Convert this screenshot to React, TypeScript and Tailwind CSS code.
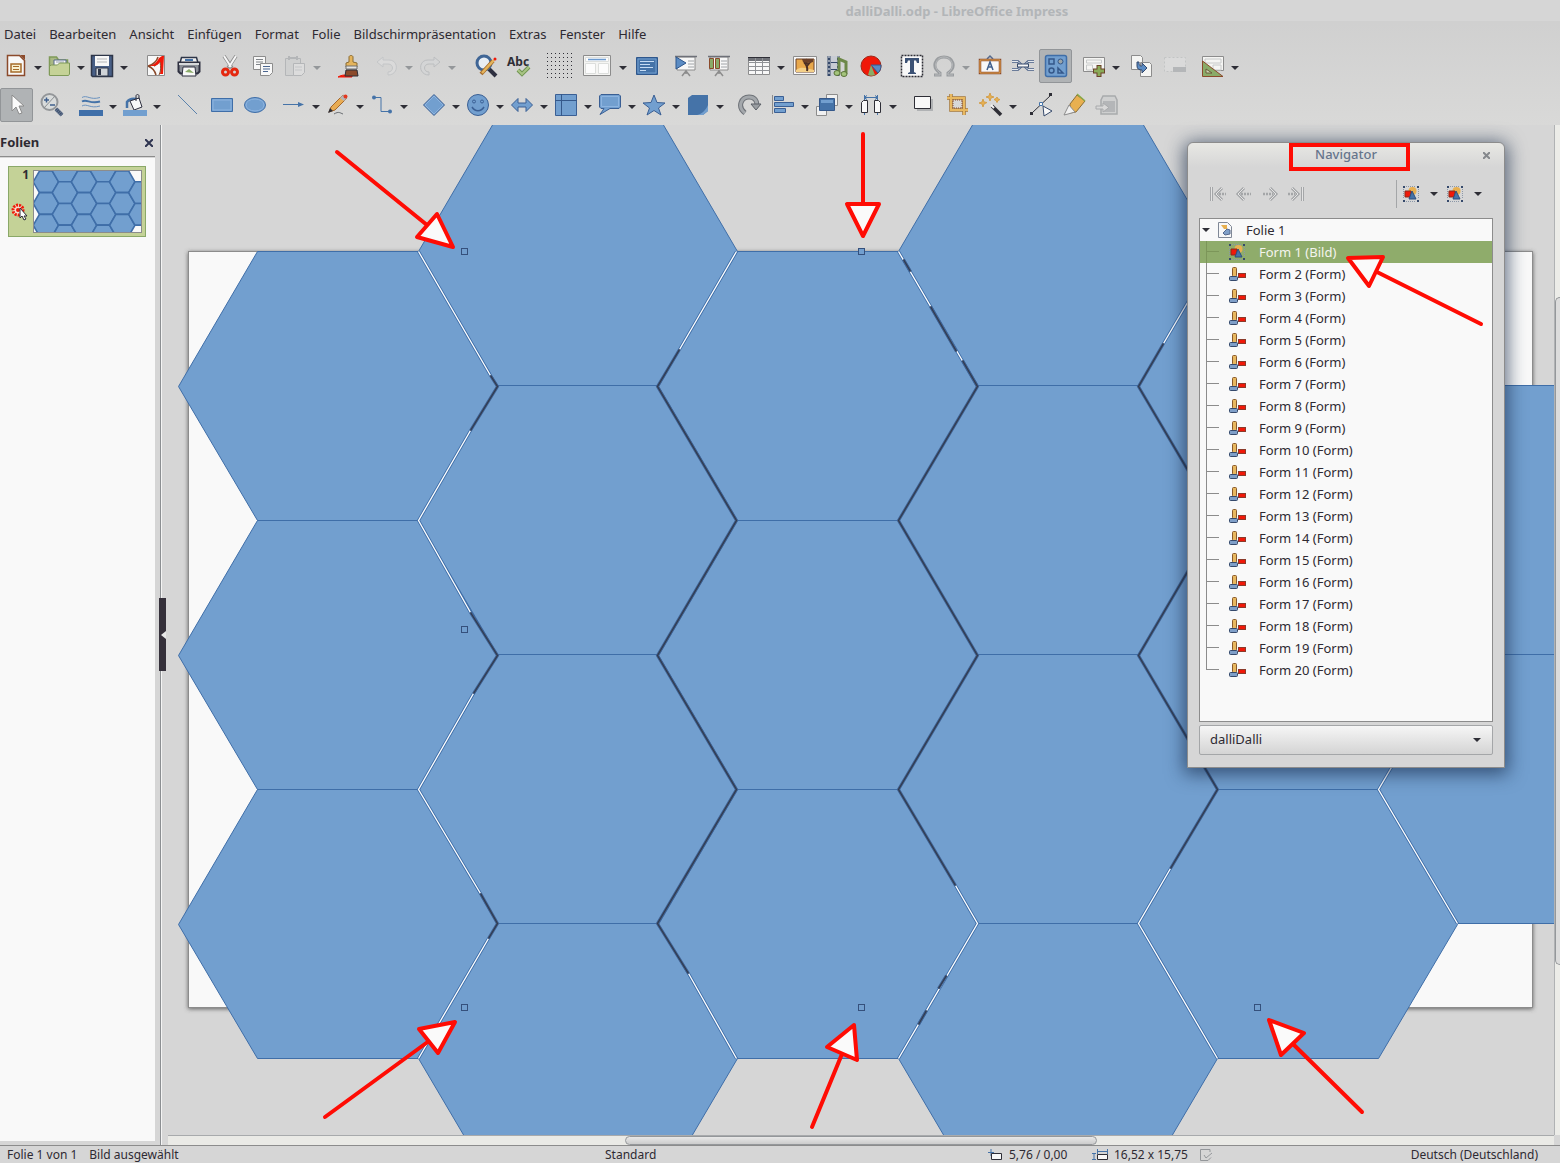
import type { ReactNode } from 'react'
import clsx from 'clsx'

type Tool = {
    name: string
    icon: ReactNode
    gap?: string
    split?: boolean
    active?: boolean
    disabled?: boolean
    wide?: boolean
}

const menuItems = ['Datei', 'Bearbeiten', 'Ansicht', 'Einfügen', 'Format', 'Folie', 'Bildschirmpräsentation', 'Extras', 'Fenster', 'Hilfe']

const Svg = ({ children }: { children: ReactNode }) => (
    <svg viewBox="0 0 24 24" className="w-6 h-6 shrink-0" fill="none" aria-hidden="true">{children}</svg>
)

const Board = ({ children }: { children: ReactNode }) => (
    <Svg>
        <path d="M8 22l4-5 4 5M12 16v4" stroke="#8c8c8c" strokeWidth="1.5" />
        <path d="M3 3h18v13H3z" fill="#f7f7f7" stroke="#8c8c8c" />
        <path d="M1 2.5h22" stroke="#6e7078" strokeWidth="1.5" />
        <path d="M14 7h6M14 10h6M14 13h6" stroke="#a0a4a8" />
        {children}
    </Svg>
)

const standardTools: Tool[] = [
    { name: 'Neu', split: true, icon: <Svg><path d="M3.5 1.5h12l5 5v15h-17z" fill="#f8f8f8" stroke="#8b4a2b" strokeWidth="1.5" /><path d="M16 1h5v5z" fill="#8b4a2b" /><path d="M7 10h10v8H7z" fill="#f8f0d0" stroke="#a56b2a" strokeWidth="1.5" /><path d="M9 12.500h6M9 15.500h6" stroke="#a56b2a" /></Svg> },
    { name: 'Öffnen', split: true, icon: <Svg><path d="M2.500 21V3h7l2 3h9v5" fill="#a9b884" stroke="#7f9a58" strokeWidth="1.5" /><path d="M7 6h12v8H7z" fill="#f8f8f8" stroke="#55698c" /><path d="M9 8h8" stroke="#9aa4b4" /><path d="M2.500 21.500V12l2-1h6l2-2h10v11l-1 1.500z" fill="#c5d297" stroke="#7f9a58" /></Svg> },
    { name: 'Speichern', split: true, icon: <Svg><path d="M1.500 1.500h21v21h-20l-1-1z" fill="#485f86" stroke="#2e3648" strokeWidth="1.5" /><path d="M5 2h14v10H5z" fill="#f8f8f8" /><path d="M7 5h10M7 8h10" stroke="#b4b6b8" /><path d="M6 14h12v8H6z" fill="#d0d4d8" stroke="#2e3648" /><path d="M8 15h3v6H8z" fill="#2e3648" /></Svg> },
    { name: 'PDF', gap: 'ml-2.5', icon: <Svg><path d="M3.500 1.500h17v20h-17z" fill="#f8f8f8" stroke="#8c8c8c" /><path d="M4 12C9 11 13 7 14 3M4 12c5 2 7 5 8 9M10 12c3-1 5-4 7-8" stroke="#8b4a2b" strokeWidth="1.500" /><path d="M5 12c5-1 8-4 10-8l3-2h2l-1 18h-3c1-5 1-8 0-12-1 2-3 3-6 4z" fill="#f01808" /><path d="M16 8c1 5 1 9-1 13" stroke="#8b4a2b" /></Svg> },
    { name: 'Drucken', icon: <Svg><path d="M4.500 3.500h15L21 9H3z" fill="#f0f0f0" stroke="#2e3648" strokeWidth="1.500" /><path d="M8 6h8" stroke="#4573a8" strokeWidth="2" /><path d="M1.500 8.500h21v9l-2 2h-17l-2-2z" fill="#8c9098" stroke="#2e3040" strokeWidth="2" /><path d="M2 10h20" stroke="#d8dadc" strokeWidth="2" /><path d="M6 13h12l1 9H5z" fill="#f8f8f8" stroke="#2e3040" /><path d="M8 18l4-3 5 4z" fill="#8aab68" /></Svg> },
    { name: 'Ausschneiden', gap: 'ml-2', icon: <Svg><path d="M6 2l8 12M18 2l-8 12" stroke="#8c8c8c" strokeWidth="3.500" /><path d="M6 2l7 11M18 2l-7 11" stroke="#f7f7f7" strokeWidth="2" /><circle cx="7.500" cy="18" r="3" stroke="#e42810" strokeWidth="3" /><circle cx="16.500" cy="18" r="3" stroke="#e42810" strokeWidth="3" /></Svg> },
    { name: 'Kopieren', icon: <Svg><path d="M2.500 2.500h12v13h-12z" fill="#f8f8f8" stroke="#8c8c8c" /><path d="M5 5.500h7M5 8h7M5 10.500h5" stroke="#808488" /><path d="M9.500 9.500h12v9l-3 3h-9z" fill="#f8f8f8" stroke="#8c8c8c" /><path d="M12 12.500h7M12 15h7M12 17.500h5" stroke="#4b6690" /></Svg> },
    { name: 'Einfügen', split: true, disabled: true, icon: <Svg><path d="M2.500 4.500h15v17h-15z" fill="#cfd0d0" stroke="#b4b6b8" /><path d="M6 2v4M14 2v4M6 4h8" stroke="#b4b6b8" strokeWidth="2" /><path d="M10.500 9.500h11v9l-3 3h-8z" fill="#dcdcdc" stroke="#b4b6b8" /><path d="M12 13h7M12 16h7" stroke="#c4c6c8" /></Svg> },
    { name: 'Format übertragen', gap: 'ml-2.5', icon: <Svg><path d="M1 23c3-2 6-2 8-2l6 1v1z" fill="#f01808" stroke="#f01808" /><path d="M12 8V3c0-2 4-2 4 0v5l4 1v4H9V9z" fill="#e4b45c" stroke="#8a6d35" /><path d="M9 12h11v3H9z" fill="#e4e4e4" stroke="#707070" /><path d="M9 16h11l1 6H8z" fill="#8b4a2b" stroke="#2e2e36" /></Svg> },
    { name: 'Rückgängig', gap: 'ml-1.5', split: true, disabled: true, icon: <Svg><path d="M2 8l6-5v3h6c10 0 10 15-1 15v-3c6 0 6-8 0-8H8v3z" fill="#dadada" stroke="#c4c6c8" /></Svg> },
    { name: 'Wiederherstellen', split: true, disabled: true, icon: <Svg><path d="M22 8l-6-5v3h-6c-10 0-10 15 1 15v-3c-6 0-6-8 0-8h5v3z" fill="#d4d5d6" stroke="#bcbec0" /></Svg> },
    { name: 'Suchen', gap: 'ml-3', icon: <Svg><path d="M15 15l7 7" stroke="#2e3040" strokeWidth="4" /><circle cx="10" cy="9" r="7" fill="#e8eef4" stroke="#3f6595" strokeWidth="3" /><path d="M7 20L19 7" stroke="#a56b2a" strokeWidth="4" /><path d="M8 19L20 6" stroke="#e4b45c" strokeWidth="2.500" /><circle cx="21" cy="5" r="1.500" fill="#f01808" /></Svg> },
    { name: 'Rechtschreibung', icon: <svg viewBox="0 0 28 26" className="w-7 h-6.5 shrink-0" fill="none" aria-hidden="true"><text x="2" y="13" fontSize="12" fontWeight="700" fontFamily="Noto Sans, sans-serif" fill="#2e2e36">Abc</text><path d="M13 17l4 4 7-7" stroke="#6f9450" strokeWidth="4" /><path d="M13 17l4 4 7-7" stroke="#a8c484" strokeWidth="2" /></svg> },
    { name: 'Raster', gap: 'ml-2', icon: <svg viewBox="0 0 26 26" className="w-6.5 h-6.5 shrink-0"><path d="M0 .5h26M0 4.500h26M0 8.500h26M0 12.500h26M0 16.500h26M0 20.500h26M0 24.500h26" stroke="#2e2e36" strokeDasharray="1 3" /></svg> },
    { name: 'Ansicht', split: true, wide: true, icon: <svg viewBox="0 0 30 24" className="w-7.5 h-6 shrink-0" fill="none"><path d="M1.500 1.500h27v20h-27z" fill="#f5f5f3" stroke="#8c8c8c" /><path d="M3.500 3.500h23v4h-23zM3.500 9.500h10v10h-10zM16.500 9.500h10v10h-10z" fill="#fcfcfc" stroke="#dcdedc" /><path d="M6 5.500h18" stroke="#6b9ad0" strokeWidth="1.500" /></svg> },
    { name: 'Masterfolie', gap: 'ml-0.5', icon: <Svg><path d="M1.500 3.500h21v17h-21z" fill="#4573a8" stroke="#2f578c" /><path d="M3 5h18v14H3z" stroke="#729fcf" /><path d="M5 7.500h14M5 10.500h10M5 13.500h13M5 16.500h6" stroke="#c6dcf4" /></Svg> },
    { name: 'Präsentation', gap: 'ml-1.5', icon: <Board><path d="M2 3l10 6-10 6z" fill="#5b8cc4" stroke="#2f578c" /></Board> },
    { name: 'Ab aktueller Folie', icon: <Board><path d="M2.500 4.500h4v10h-4zM8.500 4.500h4v10h-4z" fill="#8aab68" stroke="#8b4a2b" /></Board> },
    { name: 'Tabelle', gap: 'ml-2', split: true, icon: <Svg><path d="M1.500 3.500h21v17h-21z" fill="#f8f8f8" stroke="#8c8c8c" /><path d="M1 3h22v4H1z" fill="#707278" /><path d="M1 3.500h22" stroke="#2e2e36" /><path d="M1 8.500h22M1 12.500h22M1 16.500h22M8.500 4v17M15.500 4v17" stroke="#909296" /></Svg> },
    { name: 'Bild', gap: 'ml-0.5', icon: <Svg><path d="M.5 2.500h23v18H.5z" fill="#f8f8f8" stroke="#8c8c8c" /><path d="M3 5h18v13H3z" fill="#e8a84c" stroke="#6b4028" /><path d="M3 16c5-4 10-2 18 0v2H3z" fill="#f4d088" /><path d="M14 17c1-4 0-6-3-9M14 12l4-5M14 10l-1-5" stroke="#4b2e24" strokeWidth="2" /><path d="M9 5h11v3l-3 1-7-1z" fill="#6b4028" /></Svg> },
    { name: 'Audio oder Video', icon: <Svg><path d="M3 2v20M12 2v20" stroke="#35496b" strokeWidth="3" /><path d="M3 2v20M12 2v20" stroke="#f0f0f0" strokeDasharray="2 2" /><path d="M5 2h6v20H5z" fill="#c8ccd4" /><path d="M5 8.500h6M5 15.500h6" stroke="#35496b" /><path d="M13 19V5l7 3v12" stroke="#6d8848" strokeWidth="3" /><ellipse cx="11" cy="19" rx="3" ry="2.500" fill="#a4c47c" stroke="#5b7338" /><ellipse cx="18" cy="20" rx="3" ry="2.500" fill="#a4c47c" stroke="#5b7338" /></Svg> },
    { name: 'Diagramm', icon: <Svg><circle cx="12" cy="12" r="10" fill="#f01808" stroke="#a02818" /><path d="M12 11h10c0 4-1 6-3 8z" fill="#5b8cc4" stroke="#35598c" /><path d="M12 11l4 10c-2 1-5 1-7 0z" fill="#8aab68" /></Svg> },
    { name: 'Textfeld', gap: 'ml-2', icon: <Svg><path d="M1.500 1.500h21v21h-21z" fill="#f8f8f8" stroke="#2e2e36" strokeWidth="1.500" strokeDasharray="2 1" /><path d="M5 4h14v5h-2l-1-2.500h-2V18l2 1v1H8v-1l2-1V6.500H8L7 9H5z" fill="#3b5174" /></Svg> },
    { name: 'Sonderzeichen', split: true, disabled: true, icon: <Svg><path d="M2 21h6v-2C-1 13 3 3 12 3s13 10 4 16v2h6" stroke="#9a9da0" strokeWidth="3" /><path d="M3 21h5v-2C0 13 4 3 12 3s12 10 4 16v2h5" stroke="#b8babc" /></Svg> },
    { name: 'Fontwork', gap: 'ml-0.5', icon: <Svg><path d="M9 5l3-3 3 3" stroke="#55698c" strokeWidth="1.500" /><path d="M2 6h20v13H2z" fill="#f8f8f8" stroke="#8b4a2b" strokeWidth="2.500" /><path d="M2 6h20v13H2z" stroke="#e8a850" /><path d="M9 16l3-8 3 8M10 13h4" stroke="#3f5f8c" strokeWidth="1.500" /></Svg> },
    { name: 'Hyperlink', icon: <Svg><path d="M1 7.500h6l3 3M1 15.500h6l3-3M23 7.500h-6l-3 3M23 15.500h-6l-3-3" stroke="#485f86" strokeWidth="2.500" /><path d="M1 7.500h6l3 3M1 15.500h6l3-3M23 7.500h-6l-3 3M23 15.500h-6l-3-3" stroke="#e4e8ec" /><path d="M6 11.500h12" stroke="#35496b" strokeWidth="4" /><path d="M7 11.500h10" stroke="#f8f8f8" strokeWidth="2" /></Svg> },
    { name: 'Zeichenfunktionen', active: true, icon: <Svg><rect x="1.500" y="1.500" width="21" height="21" rx="2" fill="#729fcf" stroke="#3f6ea8" strokeWidth="1.500" /><path d="M5 5h5v5H5zM14 14v5h5z" stroke="#35588a" strokeWidth="1.500" /><circle cx="16.500" cy="7.500" r="2.500" fill="#9aa4a8" stroke="#35588a" /><circle cx="7.500" cy="16.500" r="2.500" stroke="#35588a" strokeWidth="1.500" /></Svg> },
    { name: 'Neue Folie', gap: 'ml-1.5', split: true, icon: <Svg><path d="M1.500 3.500h21v14h-21z" fill="#f5f5f3" stroke="#8c8c8c" /><path d="M4.500 6h15v3h-15zM4.500 11h6v5h-6z" stroke="#c8caca" /><path d="M17 11v12M11 17h12" stroke="#6b4028" strokeWidth="5" /><path d="M17 12v10M12 17h10" stroke="#8aab58" strokeWidth="3" /></Svg> },
    { name: 'Folie duplizieren', gap: 'ml-1', icon: <Svg><path d="M1.500 1.500h9l2 2v12h-11zM10.500 8.500h9l2 2v12h-11z" fill="#f5f5f3" stroke="#8c8c8c" /><path d="M7 8v4c0 3 2 4 5 4v3l5-5-5-5v3c-2 0-3 0-3-4z" fill="#5b8cc4" stroke="#35496b" /></Svg> },
    { name: 'Folie ausblenden', disabled: true, icon: <Svg><path d="M1.500 3.500h21v14h-21z" fill="#dadada" stroke="#c2c4c4" strokeDasharray="2 2" /><path d="M10 13h13v5H10z" fill="#b4b6b8" /></Svg> },
    { name: 'Folienlayout', gap: 'ml-1.5', split: true, icon: <Svg><path d="M1.500 2.500h21v14h-21z" fill="#f5f5f3" stroke="#8c8c8c" /><path d="M4 5h16v4H4zM12 11h8v5h-8z" stroke="#c8caca" /><path d="M1.500 7v15.500H22z" fill="#8aab68" stroke="#8b4a2b" /><path d="M5 15v4h6z" fill="#d0dcb8" stroke="#6b5a38" /></Svg> },
]

const drawingTools: Tool[] = [
    { name: 'Auswahl', active: true, icon: <Svg><path d="M7 2v16l4-4 3 7 3-1-3-7h5z" fill="#fafafa" stroke="#8c8c8c" /></Svg> },
    { name: 'Zoom', gap: 'ml-0.5', icon: <Svg><path d="M16 16l6 6" stroke="#6b7a90" strokeWidth="4" /><path d="M16 16l6 6" stroke="#35496b" strokeWidth="3" strokeDasharray="1 1" /><circle cx="9.500" cy="9" r="8" fill="#d9dcdc" stroke="#94979a" strokeWidth="2" /><path d="M4 15L15 3" stroke="#8c8f92" /><path d="M4 7h5M6.500 4.500v5M10 12h5" stroke="#3f5f8c" strokeWidth="1.500" /></Svg> },
    { name: 'Linienfarbe', gap: 'ml-1.5', split: true, icon: <Svg><path d="M3 4.500c5-3 8 3 18 0M3 13c5-3 8 3 18 0" stroke="#6b93c0" /><path d="M3 8.500c5-3 8 3 18 0" stroke="#4573a8" strokeWidth="2" /><path d="M0 17h24v6H0z" fill="#3f6fa9" /></Svg> },
    { name: 'Flächenfarbe', split: true, icon: <Svg><path d="M4 15V9c3-4 7-4 12-2" stroke="#4573a8" strokeWidth="2.500" /><path d="M7 8l9-3 3 9-8 3z" fill="#f8f8f8" stroke="#2e3040" /><path d="M13 8V3c0-2 3-2 3 0v3" stroke="#2e3040" /><path d="M0 17h24v6H0z" fill="#729fcf" /></Svg> },
    { name: 'Linie', gap: 'ml-2', icon: <Svg><path d="M3 2l19 19" stroke="#5b82ac" /></Svg> },
    { name: 'Rechteck', gap: 'ml-0.5', icon: <Svg><path d="M1.500 5.500h21v13h-21z" fill="#729fcf" stroke="#3f6ea8" /><path d="M3 7h18v10H3z" stroke="#8db4e0" /></Svg> },
    { name: 'Ellipse', icon: <Svg><ellipse cx="12" cy="12" rx="10.500" ry="7.500" fill="#729fcf" stroke="#3f6ea8" /><ellipse cx="12" cy="12" rx="9" ry="6" stroke="#8db4e0" /></Svg> },
    { name: 'Pfeil', gap: 'ml-1.5', split: true, icon: <Svg><path d="M1 11.500h17" stroke="#4573a8" /><path d="M16 9l6 2.500-6 2.500z" fill="#4573a8" /></Svg> },
    { name: 'Stift', split: true, icon: <Svg><path d="M8 21c5-3 6-1 9 0" stroke="#686c70" /><path d="M3 19l2-5L17 2l4 3L9 17z" fill="#e8ac54" stroke="#a5682c" /><path d="M14 5l4 3 3-3-4-3z" fill="#b4b6b8" /><circle cx="19.500" cy="3.500" r="2" fill="#e43820" /><path d="M2 20l2-5 3 3z" fill="#2e2e36" /></Svg> },
    { name: 'Verbinder', split: true, icon: <Svg><path d="M4 4.500h7v14h9" stroke="#4573a8" /><circle cx="4" cy="4.500" r="2" fill="#4573a8" /><circle cx="20" cy="18.500" r="2" fill="#4573a8" /></Svg> },
    { name: 'Standardformen', gap: 'ml-2', split: true, icon: <Svg><path d="M12 1.500L22.500 12 12 22.500 1.500 12z" fill="#729fcf" stroke="#3a5f94" /><path d="M12 3l9 9-9 9-9-9z" stroke="#8db4e0" /></Svg> },
    { name: 'Symbolformen', split: true, icon: <Svg><circle cx="12" cy="12" r="10.500" fill="#729fcf" stroke="#3a5f94" /><circle cx="8" cy="8.500" r="1.500" stroke="#3a5f94" /><circle cx="16" cy="8.500" r="1.500" stroke="#3a5f94" /><path d="M6 14c3 5 9 5 12 0" stroke="#3a5f94" strokeWidth="1.500" /></Svg> },
    { name: 'Blockpfeile', split: true, icon: <Svg><path d="M1.500 12L8 5.500V10h8V5.500l6.500 6.500-6.500 6.500V14H8v4.500z" fill="#729fcf" stroke="#3a5f94" /></Svg> },
    { name: 'Flussdiagramm', split: true, icon: <Svg><path d="M1.500 1.500h21v21h-21z" fill="#729fcf" stroke="#3a5f94" /><path d="M1 7.500h22M7.500 1v22" stroke="#35588a" /></Svg> },
    { name: 'Legenden', split: true, icon: <Svg><path d="M3 1.500h18L22.500 3v11L21 15.500h-9L2 21.500l4-6H3L1.500 14V3z" fill="#729fcf" stroke="#3a5f94" /><path d="M3.500 3.500h17v10h-17z" stroke="#8db4e0" /></Svg> },
    { name: 'Sterne', split: true, icon: <Svg><path d="M12 2l3 7.500 8 .5-6.500 5L19 22l-7-4.500L5 22l2.500-7L1 10l8-.5z" fill="#729fcf" stroke="#3a5f94" /></Svg> },
    { name: '3D-Objekte', split: true, icon: <Svg><path d="M2 5l4-3h16v16l-5 4H2z" fill="#4573a8" /><path d="M22 12c-2 5-6 9-11 10h6l5-4z" fill="#729fcf" /></Svg> },
    { name: 'Drehen', gap: 'ml-2', icon: <Svg><path d="M7 20C-1 14 3 4 11 4c6 0 8 4 8 8" stroke="#6e7278" strokeWidth="5" /><path d="M7 20C-1 14 3 4 11 4c6 0 8 4 8 8" stroke="#a4a8ac" strokeWidth="3" /><path d="M13 11h10l-5 6z" fill="#9a9ea2" stroke="#5a5f66" /></Svg> },
    { name: 'Ausrichten', split: true, icon: <Svg><path d="M1.500 2v19" stroke="#8c8c8c" /><path d="M3.500 3.500h9v4h-9zM3.500 9.500h19v4h-19zM3.500 15.500h11v4h-11z" fill="#729fcf" stroke="#3a5f94" /></Svg> },
    { name: 'Anordnen', split: true, icon: <Svg><path d="M11.500 1.500h11v11h-11zM1.500 13.500h10v9h-10z" fill="#f0f0f0" stroke="#8c8c8c" /><path d="M4.500 5.500h15v12h-15z" fill="#4573a8" stroke="#35588a" /><path d="M6 7h12v3H6z" fill="#729fcf" /></Svg> },
    { name: 'Verteilen', split: true, icon: <Svg><path d="M5 4.500h14M5 4.500l3-2M5 4.500l3 2M19 4.500l-3-2M19 4.500l-3 2M5.500 18v4M18.500 18v4M5.500 2v5M18.500 2v5" stroke="#4573a8" /><path d="M2.500 9.500l2-2h4v12h-6zM15.500 7.500h4l2 2v10h-6z" fill="#f8f8f8" stroke="#2e2e36" /></Svg> },
    { name: 'Schatten', gap: 'ml-2', icon: <Svg><path d="M6 6h16v12H6z" fill="#b0b2b4" /><path d="M3.500 3.500h16v12h-16z" fill="#f8f8f8" stroke="#2e2e36" /></Svg> },
    { name: 'Zuschneiden', gap: 'ml-0.5', icon: <Svg><path d="M5 1v16h17M1 5h17v17" stroke="#a5783a" strokeWidth="3.500" /><path d="M5 1v16h17M1 5h17v17" stroke="#e8b860" strokeWidth="2" /><path d="M7 7h9v8H7z" stroke="#8b4a2b" strokeDasharray="1 1" /></Svg> },
    { name: 'Filter', split: true, icon: <Svg><path d="M13 13l9 9" stroke="#2e2e36" strokeWidth="3.500" /><path d="M12 12l3 3" stroke="#f4f4f4" strokeWidth="2" /><path d="M11 0l1 3 3 1-3 1-1 3-1-3-3-1 3-1zM4 6l1 3 3 .500-3 1.500-1 3-1-3-3-1 3-1zM18 4l1 2 2 .500-2 1-1 2-1-2-2-1 2-1z" fill="#e8b050" stroke="#d4a04c" /></Svg> },
    { name: 'Punkte', gap: 'ml-1.5', icon: <Svg><path d="M3 20L22 2" stroke="#2e2e36" /><path d="M1 19h3v3H1zM20 0h3v3h-3z" fill="#2e2e36" /><path d="M10.500 9.500h3v3h-3z" fill="#f8f8f8" stroke="#4573a8" /><path d="M14 13l9 5-8 5z" fill="#f8f8f8" stroke="#35496b" /></Svg> },
    { name: 'Klebepunkte', icon: <Svg><path d="M8 11l7-9 8 6-9 11-6 1z" fill="#e8b050" stroke="#8a6d35" /><path d="M15 1l8 7" stroke="#8aab48" strokeWidth="1.500" /><path d="M2 22l5-10 6 7-7 2z" fill="#f0f0f0" stroke="#8c8c8c" /></Svg> },
    { name: 'Extrusion', disabled: true, icon: <Svg><path d="M6 7l2-4h12l2 4v14H6z" fill="#cfd0d0" stroke="#a8aaac" strokeWidth="1.500" /><path d="M8 8h12v11H8z" fill="#b4b6b8" /><path d="M1 13h7v-3l6 4.500-6 4.500v-3H1z" fill="#d8d8d8" stroke="#a8aaac" /></Svg> },
]

const Caret = ({ muted = false }: { muted?: boolean }) => (
    <svg viewBox="0 0 8 4" className={clsx('w-2 h-1 shrink-0', muted ? 'fill-[#94979a]' : 'fill-[#2e2e36]')} aria-hidden="true">
        <path d="M0 0h8L4 4z" />
    </svg>
)

const Toolbar = ({ label, tools, compact = false }: { label: string, tools: Tool[], compact?: boolean }) => (
    <div role="toolbar" aria-label={label} className={clsx('flex items-center', compact ? 'h-[38px]' : 'h-10')}>
        {tools.map((tool) => (
            <div key={tool.name} className={clsx('flex shrink-0', tool.gap)}>
                <button
                    type="button"
                    aria-label={tool.name}
                    disabled={tool.disabled}
                    className={clsx(
                        'flex items-center justify-center h-[34px] rounded-xs',
                        tool.wide ? 'w-[41px]' : compact && tool.split ? 'w-8' : 'w-[33px]',
                        tool.active && 'bg-[#b0b3b5] border border-[#929598]'
                    )}
                >
                    {tool.icon}
                </button>
                {tool.split && (
                    <button type="button" aria-label={`${tool.name} Optionen`} disabled={tool.disabled} className="flex items-center justify-center w-[11px] pt-1">
                        <Caret muted={tool.disabled} />
                    </button>
                )}
            </div>
        ))}
    </div>
)

// Hexagon columns: left vertex and the centre line of every tile
const columns = [
    { x: 178, rows: [386, 655, 924] },
    { x: 418, rows: [251, 520, 789, 1058] },
    { x: 658, rows: [386, 655, 924] },
    { x: 898, rows: [251, 520, 789, 1058] },
    { x: 1138, rows: [386, 655, 924] },
    { x: 1378, rows: [520, 789] },
]

const hexagon = (x: number, y: number) => `M${x} ${y}l79-135h161l79 135-79 134h-161z`

const Hexagons = ({ stroke }: { stroke: number }) => (
    <g fill="#729fcf" stroke="#3f6ea8" strokeWidth={stroke}>
        {columns.map((column) => column.rows.map((y) => (
            <path key={`${column.x}-${y}`} d={hexagon(column.x, y)} />
        )))}
    </g>
)

const lightEdges = 'M418 251l72 124M470 430l-52 90 52 92M473 693l-55 96 62 104M488 938l-70 120M736 251l-57 98M688 973l48 85M898 251l79 135M955 885l22 38-79 135M1217 251l-54 92M1170 868l-32 55 79 135M1457 655l-79 134 79 134'
const darkEdges = 'M490 375l7 11-27 44M470 612l27 43-24 38M480 893l17 30-9 15M679 349l-22 37 79 134-79 135 79 134-79 134 31 50M903 259l7 12M930 306l26 45M962 360l15 26-79 134 79 135-79 134 57 96M946 975l-8 13M926 1010l-8 14M1163 343l-25 43 79 134-79 135 79 134-47 79'
const handles = [[464, 251], [861, 251], [464, 629], [464, 1007], [861, 1007], [1257, 1007]]

const Slide = () => (
    <svg viewBox="162 125 1392 1010" preserveAspectRatio="xMinYMin slice" className="w-full h-full" aria-label="Folie 1">
        <defs>
            <filter id="page-shadow" x="-5%" y="-5%" width="110%" height="110%">
                <feDropShadow dx="0" dy="1" stdDeviation="2" floodColor="#444" floodOpacity="0.8" />
            </filter>
        </defs>
        <rect x="188.5" y="251.5" width="1344" height="756" fill="#f9f9f9" stroke="#8c8c8c" filter="url(#page-shadow)" />
        <g transform="translate(.5 .5)" fill="none">
            <Hexagons stroke={1} />
            <path d={lightEdges} stroke="#3f6ea8" strokeWidth="3" />
            <path d={lightEdges} stroke="#ffffff" strokeWidth="1.3" />
            <path d={darkEdges} stroke="#3f6090" strokeWidth="3" />
            <path d={darkEdges} stroke="#323a4c" strokeWidth="1.2" />
        </g>
        {handles.map(([x, y]) => (
            <rect key={`${x}-${y}`} x={x - 2.5} y={y - 2.5} width="6" height="6" fill="#729fcf" stroke="#35507c" />
        ))}
    </svg>
)

const SlidePanel = () => (
    <aside className="flex flex-col w-[155px] shrink-0 mb-1">
        <div className="flex items-center justify-between h-8 pt-1 border-b border-[#8c8c8c]">
            <h2 className="text-[13px] font-bold">Folien</h2>
            <button type="button" aria-label="Schließen" className="p-0.5">
                <svg viewBox="0 0 8 8" className="w-2 h-2" stroke="#2e3450" strokeWidth="2"><path d="M0 0l8 8M8 0L0 8" /></svg>
            </button>
        </div>
        <div className="flex-1 px-2 pt-2 mt-px bg-[#f9f9f9]">
            <button type="button" className="flex w-[138px] h-[71px] bg-[#c4d297] border border-[#8aa868]">
                <span className="flex flex-col w-6 pl-0.5">
                    <span className="text-xs font-bold pr-1 text-right">1</span>
                    <svg viewBox="0 0 18 18" className="w-4.5 h-4.5 mt-5">
                        <circle cx="7" cy="7" r="5" fill="#f8e0d0" stroke="#f01808" strokeWidth="3" strokeDasharray="2 1" />
                        <circle cx="7" cy="7" r="2" fill="#f01808" />
                        <path d="M9 5v10l2-2 2 4 2-1-2-3h3z" fill="#fff" stroke="#2e2e36" />
                    </svg>
                </span>
                <svg viewBox="188 251 1345 757" preserveAspectRatio="none" className="w-[109px] h-[63px] mt-[3px] bg-[#f9f9f9] border border-[#8c8c8c]">
                    <Hexagons stroke={20} />
                </svg>
            </button>
        </div>
    </aside>
)

const GroupIcon = () => (
    <svg viewBox="0 0 16 16" className="w-4 h-4 shrink-0" aria-hidden="true">
        <circle cx="9.500" cy="5" r="4" fill="#e8b050" />
        <path d="M2 5h6v6H2z" fill="#f01808" stroke="#8b2a1b" />
        <path d="M9 5l4 8H6z" fill="#4573a8" stroke="#2f4f7c" />
        <path d="M0 0h2v2H0zM14 0h2v2h-2zM0 14h2v2H0zM14 14h2v2h-2z" fill="#35496b" />
        <path d="M3 .5h10M3 15.500h10M.5 3v10M15.500 3v10" stroke="#8c98a8" strokeDasharray="1 1" />
    </svg>
)

const ShapeIcon = () => (
    <svg viewBox="0 0 18 15" className="w-4.5 h-[15px] shrink-0" aria-hidden="true">
        <rect x="3.500" y=".5" width="4" height="9" rx="1" fill="#e8b860" stroke="#8a5a2a" />
        <rect x=".5" y="9.500" width="8" height="4" rx="1" fill="#7f9fc8" stroke="#35496b" />
        <rect x="9.500" y="6.500" width="7" height="4" fill="#f01808" stroke="#8b3a2b" />
    </svg>
)

const navButtons = [
    { name: 'Erste Folie', path: 'M2.500 2v14M13 3L7 9l6 6', dots: 'M10 9h7' },
    { name: 'Vorherige Folie', path: 'M9 3L3 9l6 6', dots: 'M6 9h10' },
    { name: 'Nächste Folie', path: 'M9 3l6 6-6 6', dots: 'M2 9h10' },
    { name: 'Letzte Folie', path: 'M15.500 2v14M5 3l6 6-6 6', dots: 'M1 9h7' },
]

const Navigator = () => {
    const shapes = Array.from({ length: 20 }, (_, i) => i + 1)

    return (
        <section aria-label="Navigator" className="absolute top-[17px] right-[55px] flex flex-col w-[318px] h-[626px] px-[11px] pb-3 bg-[#d6d6d6] border border-[#8c8c8c] rounded-t-md shadow-[0_3px_18px_3px_rgba(20,40,70,0.65)]">
            {/* Title */}
            <div className="relative flex items-center justify-center h-6 -mx-[11px] rounded-t-md bg-linear-to-b from-[#e8e8e4] to-[#d6d6d6]">
                <h2 className="text-[13px] font-medium text-[#66758c]">Navigator</h2>
                <button type="button" aria-label="Navigator schließen" className="absolute right-3 p-0.5">
                    <svg viewBox="0 0 7 7" className="w-[7px] h-[7px]" stroke="#85888c" strokeWidth="2"><path d="M0 0l7 7M7 0L0 7" /></svg>
                </button>
            </div>

            {/* Navigation */}
            <div className="flex items-center h-8 mt-[11px] mb-2 pl-1.5 pr-2">
                {navButtons.map((button) => (
                    <button key={button.name} type="button" aria-label={button.name} disabled className="flex justify-center w-[26px]">
                        <svg viewBox="0 0 18 18" className="w-4.5 h-4.5" fill="none">
                            <path d={button.dots} stroke="#a4a6a8" strokeWidth="2.500" strokeDasharray="2 1" />
                            <path d={button.path} stroke="#a4a6a8" strokeWidth="3" />
                            <path d={button.path} stroke="#e4e4e4" strokeWidth="1" />
                        </svg>
                    </button>
                ))}
                <div className="flex items-center ml-auto h-7 border-l border-[#a4a6a8]">
                    {['Ziehmodus', 'Formen anzeigen'].map((name) => (
                        <div key={name} className="flex items-center">
                            <button type="button" aria-label={name} className="flex justify-center w-7.5 pr-0.5"><GroupIcon /></button>
                            <button type="button" aria-label={`${name} Optionen`} className="flex justify-center w-3.5"><Caret /></button>
                        </div>
                    ))}
                </div>
            </div>

            {/* Shape tree */}
            <ul role="tree" aria-label="Formen" className="flex-1 bg-[#f9f9f9] border border-[#8c8c8c] text-[13px] leading-[22px]">
                <li role="treeitem" aria-expanded="true" className="flex items-center h-[22px] pl-0.5">
                    <Caret />
                    <svg viewBox="0 0 14 16" className="w-3.5 h-4 ml-2 mr-3.5" aria-hidden="true">
                        <path d="M.5.5h9l4 4v11H.5z" fill="#f8f8f8" stroke="#808896" />
                        <path d="M3 3h6v4H6z" fill="#e8b050" />
                        <path d="M5 11l4-4 3 1v4l-5 1z" fill="#7f9fc8" stroke="#55698c" />
                    </svg>
                    Folie 1
                </li>
                {shapes.map((n) => (
                    <li key={n} role="treeitem" aria-selected={n === 1} className={clsx('flex items-center h-[22px] pl-1.5', n === 1 && 'bg-[#8fac6b] text-[#f4f4ee]')}>
                        <span className="w-[13px] h-[22px] mr-2.5">
                            <span className={clsx('block h-[11px] border-l border-b', n === 1 ? 'border-[#7c9659]' : 'border-[#8c8c8c]')} />
                            <span className={clsx('block h-[11px]', n !== 20 && 'border-l', n === 1 ? 'border-[#7c9659]' : 'border-[#8c8c8c]')} />
                        </span>
                        <span className="w-[30px]">{n === 1 ? <GroupIcon /> : <ShapeIcon />}</span>
                        Form {n} ({n === 1 ? 'Bild' : 'Form'})
                    </li>
                ))}
            </ul>

            {/* Document */}
            <div className="relative flex items-center mt-[3px]">
                <select aria-label="Dokument" className="w-full h-[30px] pl-2.5 appearance-none text-[13px] border border-[#a4a6a8] rounded-xs bg-linear-to-b from-[#f6f6f6] to-[#d4d4d4]">
                    <option>dalliDalli</option>
                </select>
                <span className="absolute right-3 pointer-events-none"><Caret /></span>
            </div>
        </section>
    )
}

const Splitter = () => (
    <div className="relative w-[7px] shrink-0 pl-[5px]">
        <div className="w-0.5 h-full bg-[#8c8f92] border-r border-[#f4f4f4]" />
        <button type="button" aria-label="Folienbereich ausblenden" className="absolute left-1 top-[473px] z-10 flex items-center w-[7px] h-[73px] bg-[#35303a]">
            <svg viewBox="0 0 5 8" className="w-[5px] h-2 ml-0.5 fill-[#e8e8e8]"><path d="M5 0v8L0 4z" /></svg>
        </button>
    </div>
)

const StatusBar = () => (
    <footer className="grid grid-cols-[605px_382px_105px_1fr_auto] items-center h-[18px] pr-[22px] pt-px border-t border-[#8c8c8c] text-xs leading-4 whitespace-nowrap">
        <div className="flex gap-3 pl-[7px]">
            <span>Folie 1 von 1</span>
            <span>Bild ausgewählt</span>
        </div>
        <span>Standard</span>
        <span className="flex items-center gap-1.5">
            <svg viewBox="0 0 16 12" className="w-4 h-3" fill="none"><path d="M4 0v7M1 3.500h6" stroke="#4573a8" /><path d="M4.500 4.500h10v6h-10z" fill="#f8f8f8" stroke="#2e2e36" /></svg>
            5,76 / 0,00
        </span>
        <span className="flex items-center gap-1.5">
            <svg viewBox="0 0 16 12" className="w-4 h-3" fill="none"><path d="M0 4.500h4M2 4v7M0 10.500h4M5 2.500h11M5.500 0v5M15.500 0v5" stroke="#4573a8" /><path d="M5.500 5.500h10v5h-10z" fill="#f8f8f8" stroke="#2e2e36" /></svg>
            16,52 x 15,75
            <svg viewBox="0 0 12 12" className="w-3 h-3 ml-1.5" fill="none" stroke="#94979a"><path d="M10 3V.5H.5v11H8l3-3M4 6l2 3 6-5" /></svg>
        </span>
        <span>Deutsch (Deutschland)</span>
    </footer>
)

// Shaft and head of each red arrow
const arrows = [
    { shaft: 'M337 152l90 73', head: 'M453 247l-16-33-20 23z' },
    { shaft: 'M863 134v70', head: 'M863 236l-16-32h32z' },
    { shaft: 'M1481 324l-104-52', head: 'M1348 258l35-1-14 29z' },
    { shaft: 'M325 1117l104-76', head: 'M455 1022l-36 7 19 24z' },
    { shaft: 'M812 1127l30-73', head: 'M854 1025l-27 22 30 13z' },
    { shaft: 'M1362 1112l-69-68', head: 'M1269 1020l35 13-23 22z' },
]

const Annotations = () => (
    <svg viewBox="0 0 1560 1163" preserveAspectRatio="xMinYMin slice" className="absolute inset-0 w-full h-full pointer-events-none z-20" stroke="#ff0c04" strokeWidth="4" strokeLinecap="round" strokeLinejoin="round" aria-hidden="true">
        <rect x="1291" y="145" width="117" height="24" fill="none" strokeLinejoin="miter" />
        {arrows.map((arrow) => (
            <g key={arrow.shaft}>
                <path d={arrow.shaft} />
                <path d={arrow.head} fill="#fafafa" />
            </g>
        ))}
    </svg>
)

const App = () => {
    return (
        <div className="relative flex flex-col h-screen overflow-hidden bg-[#d6d6d6] text-[#2e2a32] font-['Noto_Sans',sans-serif]">
            <header className="bg-linear-to-b from-[#cecece] to-[#d9d9d8]">
                <h1 className="h-[21px] pl-[354px] pt-0.5 text-center text-[13px] font-bold text-[#b2b5b8] bg-[#d6d6d6]">dalliDalli.odp - LibreOffice Impress</h1>
                <nav className="flex items-center gap-[13px] h-[26px] pl-1 pt-0.5 text-[13px]">
                    {menuItems.map((item) => (
                        <button key={item} type="button">{item}</button>
                    ))}
                </nav>
                <Toolbar label="Standard" tools={standardTools} compact />
                <Toolbar label="Zeichnung" tools={drawingTools} />
            </header>

            <div className="relative flex flex-1 min-h-0">
                <SlidePanel />
                <Splitter />
                <main className="flex flex-col flex-1 min-w-0">
                    <div className="flex-1 min-h-0">
                        <Slide />
                    </div>
                    {/* Horizontal scrollbar */}
                    <div className="h-2.5 ml-1.5 pl-[457px] pr-[457px] border-t border-[#a8aaac] bg-[#eaeae6]">
                        <div className="h-full rounded-full border border-[#94979a] bg-linear-to-b from-[#e8e8e8] to-[#cccccc]" />
                    </div>
                </main>
                {/* Vertical scrollbar */}
                <div className="w-1.5 shrink-0 pt-[172px] mb-2.5 border-l border-[#b0b2b4] bg-[#ecece8]">
                    <div className="h-[668px] rounded-l-full border border-r-0 border-[#94979a] bg-[#dcdcdc]" />
                </div>
                <Navigator />
            </div>

            <StatusBar />
            <Annotations />
        </div>
    )
}

export default App
